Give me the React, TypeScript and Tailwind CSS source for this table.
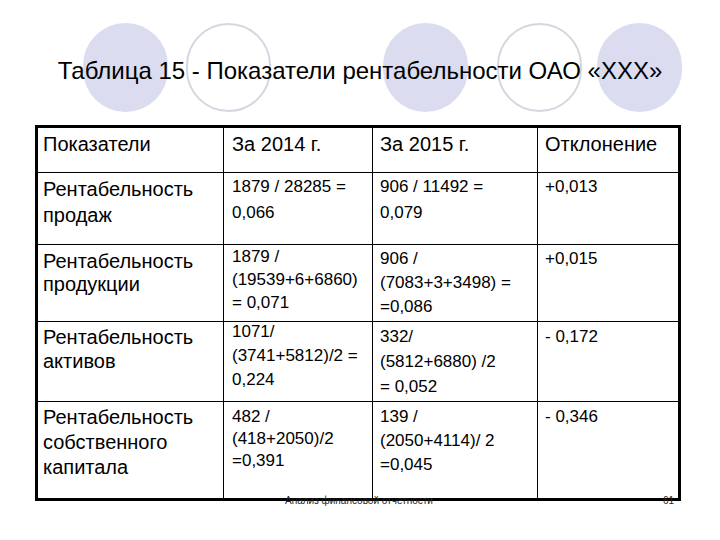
import React from "react";

type Cell = { lines: string[]; lh: number; pt: number; size: number };

const rows: { h: number; cells: Cell[] }[] = [
  {
    h: 72,
    cells: [
      { lines: ["Рентабельность", "продаж"], lh: 26, pt: 3, size: 20 },
      { lines: ["1879 / 28285 =", "0,066"], lh: 26, pt: 1, size: 17 },
      { lines: ["906 / 11492 =", "0,079"], lh: 26, pt: 1, size: 17 },
      { lines: ["+0,013"], lh: 26, pt: 1, size: 17 },
    ],
  },
  {
    h: 77,
    cells: [
      { lines: ["Рентабельность", "продукции"], lh: 23, pt: 5, size: 20 },
      { lines: ["1879 /", "(19539+6+6860)", "= 0,071"], lh: 23, pt: 0, size: 17 },
      { lines: ["906 /", "(7083+3+3498) =", "=0,086"], lh: 24, pt: 2, size: 17 },
      { lines: ["+0,015"], lh: 24, pt: 2, size: 17 },
    ],
  },
  {
    h: 80,
    cells: [
      { lines: ["Рентабельность", "активов"], lh: 24, pt: 3, size: 20 },
      { lines: ["1071/", "(3741+5812)/2 =", "0,224"], lh: 24, pt: -2, size: 17 },
      { lines: ["332/", "(5812+6880) /2", "= 0,052"], lh: 25, pt: 2, size: 17 },
      { lines: ["- 0,172"], lh: 25, pt: 2, size: 17 },
    ],
  },
  {
    h: 96,
    cells: [
      { lines: ["Рентабельность", "собственного", "капитала"], lh: 25, pt: 3, size: 20 },
      { lines: ["482 /", "(418+2050)/2", "=0,391"], lh: 22, pt: 4, size: 17 },
      { lines: ["139 /", "(2050+4114)/ 2", "=0,045"], lh: 24, pt: 3, size: 17 },
      { lines: ["- 0,346"], lh: 24, pt: 3, size: 17 },
    ],
  },
];

const widths = [186, 149, 165, 140];
const pads = [5, 8, 7, 7];

function Filled({ ml }: { ml: string }) {
  return <div className={`w-[85px] h-[89px] shrink-0 rounded-full bg-[#dcdcf0] ${ml}`} />;
}
function Ring({ ml }: { ml: string }) {
  return <div className={`w-[85px] h-[89px] shrink-0 rounded-full border-2 border-[#d6d6e0] ${ml}`} />;
}

export default function App() {
  return (
    <div
      className="relative w-[720px] h-[540px] bg-white text-black overflow-hidden"
      style={{ fontFamily: '"Liberation Sans", Arial, sans-serif' }}
    >
      {/* decorative background circles behind the title */}
      <div className="absolute inset-x-0 top-[23px] flex pl-[83px]">
        <Filled ml="" />
        <Ring ml="ml-[18px]" />
        <Filled ml="ml-[112px]" />
        <Ring ml="ml-[29px]" />
        <Filled ml="ml-[15px]" />
      </div>

      <div className="relative flex flex-col">
        <div className="h-[125px] flex items-center justify-center pt-[16px]">
          <h1 className="text-[24px] leading-none font-normal">
            Таблица 15 - Показатели рентабельности ОАО «XXX»
          </h1>
        </div>

        <div className="ml-[35px] w-[646px] border-[3px] border-black bg-white">
          <div className="flex h-[45px] border-b border-black">
            {["Показатели", "За 2014 г.", "За 2015 г.", "Отклонение"].map((t, i) => (
              <div
                key={i}
                className={`pt-[4px] text-[20px] leading-[24px] whitespace-nowrap ${i < 3 ? "border-r border-black" : ""}`}
                style={{ width: widths[i], paddingLeft: pads[i] }}
              >
                {t}
              </div>
            ))}
          </div>
          {rows.map((r, ri) => (
            <div
              key={ri}
              className={`flex ${ri < rows.length - 1 ? "border-b border-black" : ""}`}
              style={{ height: r.h }}
            >
              {r.cells.map((c, ci) => (
                <div
                  key={ci}
                  className={`${ci < 3 ? "border-r border-black" : ""}`}
                  style={{
                    width: widths[ci],
                    paddingLeft: pads[ci],
                    fontSize: c.size,
                    lineHeight: `${c.lh}px`,
                  }}
                >
                  <div style={{ marginTop: c.pt }}>
                    {c.lines.map((l, li) => (
                      <div key={li} className="whitespace-nowrap">
                        {l}
                      </div>
                    ))}
                  </div>
                </div>
              ))}
            </div>
          ))}
        </div>

        <div className="flex items-start -mt-[5px] pl-[285px] pr-[46px] text-[10px] leading-[10px] text-[#222]">
          <span>Анализ финансовой отчетности</span>
          <span className="ml-auto">61</span>
        </div>
      </div>
    </div>
  );
}
